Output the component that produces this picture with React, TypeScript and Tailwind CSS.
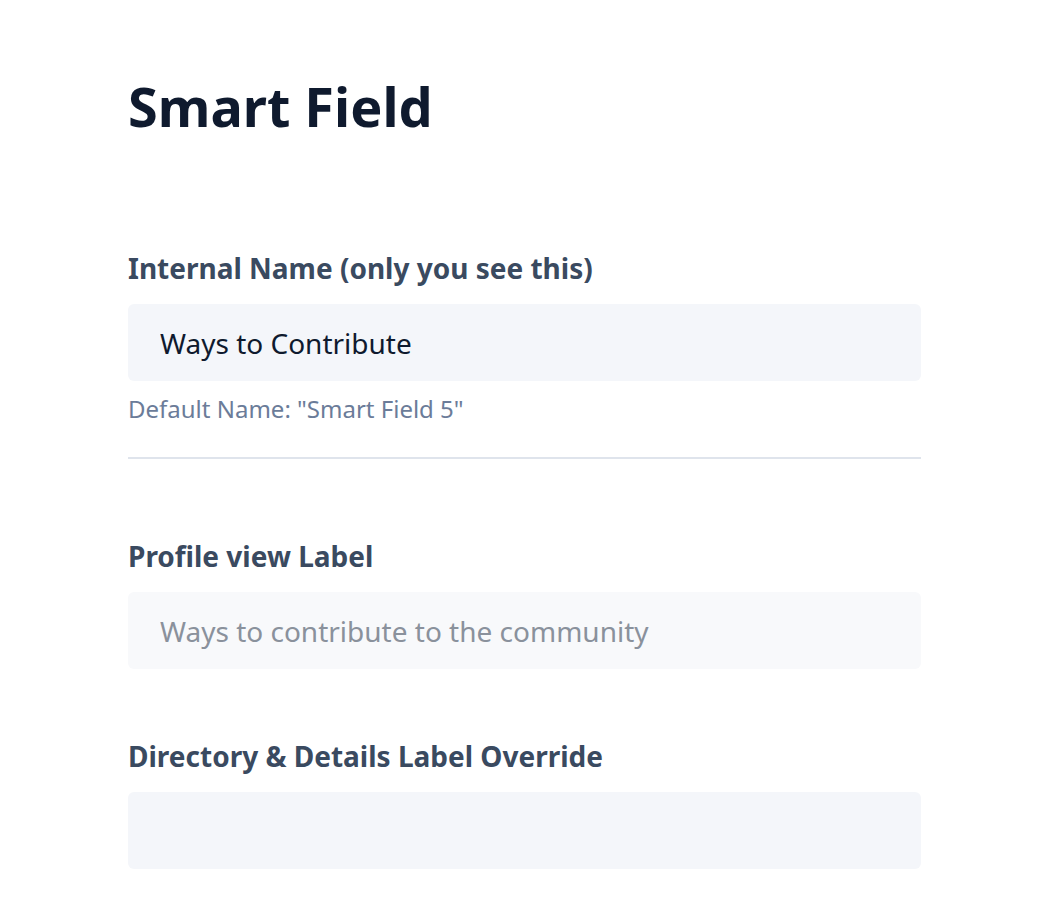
export default function App() {
  return (
    <div className="min-h-screen bg-white font-['Noto_Sans',sans-serif]">
      <div className="w-[793px] ml-[128px] pt-[72px]">
        <h1 className="text-[54px] font-bold leading-[68px] text-[#0f1a2e]">Smart Field</h1>

        <div className="mt-[110px]">
          <label className="block text-[28px] font-bold leading-[36px] text-[#3a4a60]">Internal Name (only you see this)</label>
          <input
            type="text"
            defaultValue="Ways to Contribute"
            className="mt-[18px] block w-full h-[77px] rounded-md bg-[#f4f6fa] px-8 text-[28px] text-[#0f1a2e] outline-none"
          />
          <p className="mt-[12px] text-[24px] leading-[32px] text-[#6b7c99]">Default Name: "Smart Field 5"</p>
        </div>

        <div className="mt-[32px] h-[2px] bg-[#dfe4ec]" />

        <div className="mt-[79px]">
          <label className="block text-[28px] font-bold leading-[36px] text-[#3a4a60]">Profile view Label</label>
          <input
            type="text"
            placeholder="Ways to contribute to the community"
            className="mt-[18px] block w-full h-[77px] rounded-md bg-[#f8f9fb] px-8 text-[28px] text-[#0f1a2e] placeholder:text-[#8a919c] outline-none"
          />
        </div>

        <div className="mt-[69px]">
          <label className="block text-[28px] font-bold leading-[36px] text-[#3a4a60]">Directory &amp; Details Label Override</label>
          <input
            type="text"
            className="mt-[18px] block w-full h-[77px] rounded-md bg-[#f4f6fa] px-8 text-[28px] text-[#0f1a2e] outline-none"
          />
        </div>
      </div>
    </div>
  )
}
